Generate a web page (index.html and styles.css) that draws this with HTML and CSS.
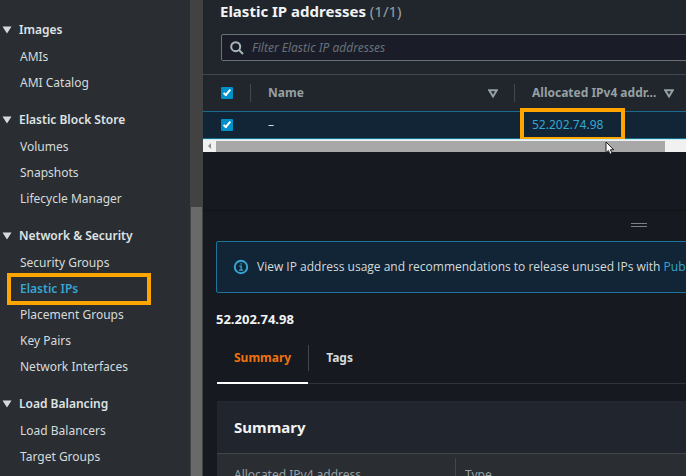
FILE: index.html
```html
<!DOCTYPE html>
<html lang="en">
<head>
<meta charset="utf-8">
<title>Elastic IP addresses</title>
<link rel="stylesheet" href="styles.css">
</head>
<body>
<nav class="sidebar" aria-label="EC2 navigation">
  <section class="group">
    <h2><svg class="caret" viewBox="0 0 10 8"><path d="M0.5 0.5h9L5 7.5z"/></svg>Images</h2>
    <ul><li><a href="#">AMIs</a></li><li><a href="#">AMI Catalog</a></li></ul>
  </section>
  <section class="group">
    <h2><svg class="caret" viewBox="0 0 10 8"><path d="M0.5 0.5h9L5 7.5z"/></svg>Elastic Block Store</h2>
    <ul><li><a href="#">Volumes</a></li><li><a href="#">Snapshots</a></li><li><a href="#">Lifecycle Manager</a></li></ul>
  </section>
  <section class="group">
    <h2><svg class="caret" viewBox="0 0 10 8"><path d="M0.5 0.5h9L5 7.5z"/></svg>Network &amp; Security</h2>
    <ul><li><a href="#">Security Groups</a></li><li class="current"><a href="#" aria-current="page">Elastic IPs</a></li><li><a href="#">Placement Groups</a></li><li><a href="#">Key Pairs</a></li><li><a href="#">Network Interfaces</a></li></ul>
  </section>
  <section class="group">
    <h2><svg class="caret" viewBox="0 0 10 8"><path d="M0.5 0.5h9L5 7.5z"/></svg>Load Balancing</h2>
    <ul><li><a href="#">Load Balancers</a></li><li><a href="#">Target Groups</a></li></ul>
  </section>
</nav>
<div class="vscroll"><div class="vthumb"></div></div>
<main>
  <section class="list">
    <h1>Elastic IP addresses <span>(1/1)</span></h1>
    <label class="search">
      <svg viewBox="0 0 14 14"><circle cx="5.7" cy="5.7" r="4.5"/><path d="M9 9l4 4"/></svg>
      <input type="text" placeholder="Filter Elastic IP addresses" aria-label="Filter Elastic IP addresses">
    </label>
    <table>
      <colgroup><col class="c-check"><col class="c-name"><col></colgroup>
      <thead>
        <tr>
          <th><input type="checkbox" checked aria-label="Select all"></th>
          <th><div class="head">Name<svg class="sort" viewBox="0 0 10 9"><path d="M1.2 1.2h7.6L5 7.4z"/></svg></div></th>
          <th><div class="head">Allocated IPv4 addr...<svg class="sort" viewBox="0 0 10 9"><path d="M1.2 1.2h7.6L5 7.4z"/></svg></div></th>
        </tr>
      </thead>
      <tbody>
        <tr>
          <td><input type="checkbox" checked aria-label="Select 52.202.74.98"></td>
          <td>–</td>
          <td><a class="marked" href="#">52.202.74.98</a></td>
        </tr>
      </tbody>
    </table>
    <div class="hscroll">
      <svg class="arrow" viewBox="0 0 13 12"><path d="M8 3v6L5 6z"/></svg>
      <div class="hthumb"></div>
      <svg class="cursor" viewBox="0 0 10 14"><path d="M1 1v10.6l2.4-2.1 1.6 3.7 2-.9-1.6-3.6h3.3z"/></svg>
    </div>
  </section>
  <div class="gap"></div>
  <section class="details">
    <div class="grip"></div>
    <div class="alert">
      <svg viewBox="0 0 16 16"><circle cx="8" cy="8" r="6.2"/><path d="M6.3 7.2H8.2V11M6.1 11.2h4M7.3 4.8h1.6"/></svg>
      <p>View IP address usage and recommendations to release unused IPs with <a href="#">Public IP insights</a></p>
    </div>
    <h2>52.202.74.98</h2>
    <div class="tabs" role="tablist">
      <button class="active" role="tab" aria-selected="true">Summary</button>
      <button role="tab" aria-selected="false">Tags</button>
    </div>
    <div class="card">
      <h3>Summary</h3>
      <div class="facts"><div>Allocated IPv4 address</div><div>Type</div></div>
    </div>
  </section>
</main>
</body>
</html>
```
FILE: styles.css
```css
* { box-sizing: border-box; }
body {
  margin: 0;
  height: 100vh;
  display: flex;
  overflow: hidden;
  background: #16191f;
  color: #d5dbdb;
  font: 12px/18px "Noto Sans", "Open Sans", sans-serif;
}
h1, h2, h3, p, ul { margin: 0; padding: 0; }
a { color: #36a5d0; text-decoration: none; white-space: nowrap; }

.sidebar {
  flex: 0 0 190px;
  background: #2a2e33;
  padding-top: 16px;
}
.group { margin-bottom: 10px; }
.group h2 {
  display: flex;
  align-items: center;
  gap: 7px;
  padding-left: 2px;
  font-size: 12px;
  line-height: 28px;
  font-weight: 600;
  color: #dfe3e4;
}
.caret { width: 10px; height: 8px; fill: #d5dbdb; }
.group ul { list-style: none; padding-left: 20px; }
.group li { line-height: 26px; }
.group li a { color: #d5dbdb; }
.group .current { position: relative; }
.group .current a { color: #36a5d0; font-weight: 600; }
.current::after {
  content: "";
  position: absolute;
  inset: -3px 39px -3px -13px;
  border: 4px solid #ffa500;
}
.vscroll {
  flex: 0 0 13px;
  background: #424242;
  padding: 207px 1px 0;
}
.vthumb { height: 100%; background: #696969; }

main { flex: 1; min-width: 0; overflow: hidden; }
.list { background: #21252c; }
h1 {
  padding: 0 17px;
  font-size: 15px;
  line-height: 22px;
  font-weight: 700;
  color: #f2f3f3;
}
h1 span { font-weight: 400; color: #95a0a2; }
.search {
  display: flex;
  align-items: center;
  gap: 8px;
  height: 27px;
  margin: 12px -4px 13px 18px;
  padding: 0 8px;
  border: 1px solid #687078;
  border-radius: 2px;
  background: #1a1d28;
}
.search svg { width: 14px; height: 14px; fill: none; stroke: #aab7b8; stroke-width: 2; }
.search input {
  flex: 1;
  border: 0;
  padding: 0;
  background: none;
  color: #d5dbdb;
  font: inherit;
}
.search input::placeholder { color: #687078; font-style: italic; opacity: 1; }

table { width: 100%; table-layout: fixed; border-collapse: collapse; border-top: 1px solid #414750; }
.c-check { width: 47px; }
.c-name { width: 264px; }
th, td { padding: 0 0 0 17px; text-align: left; font-weight: 400; }
th { height: 37px; color: #95a0a2; font-weight: 700; }
th .head {
  display: flex;
  align-items: center;
  justify-content: space-between;
  height: 18px;
  margin-left: -17px;
  padding: 0 16px 0 17px;
  border-left: 1px solid #414750;
  white-space: nowrap;
}
th:last-child .head { padding-right: 12px; }
.sort { flex: none; width: 10px; height: 9px; fill: none; stroke: #95a0a2; stroke-width: 2; }
td { height: 27px; }
td + td { padding-left: 18px; }
tbody tr { background: #112536; border: solid #176b8f; border-width: 1px 0; }
input[type="checkbox"] {
  appearance: none;
  display: block;
  width: 12px;
  height: 12px;
  margin: 0 0 0 1px;
  border-radius: 1px;
  background: #0090c9;
  position: relative;
}
input[type="checkbox"]::after {
  content: "";
  position: absolute;
  left: 4px;
  top: 1px;
  width: 4px;
  height: 8px;
  border: solid #fff;
  border-width: 0 2px 2px 0;
  box-sizing: border-box;
  rotate: 40deg;
}
.marked { position: relative; }
.marked::after {
  content: "";
  position: absolute;
  inset: -8px -22px -8px -12px;
  border: 4px solid #ffa500;
}
.hscroll {
  position: relative;
  display: flex;
  align-items: center;
  height: 13px;
  padding-right: 21px;
  background: #f1f1f1;
  border-top: 1px solid #c4eef5;
}
.arrow { width: 13px; height: 12px; fill: #8d8d8d; }
.hthumb { flex: 1; height: 11px; background: #a8a8a8; }
.cursor {
  position: absolute;
  right: 71px;
  top: 1px;
  z-index: 1;
  width: 10px;
  height: 14px;
  fill: #fff;
  stroke: #222;
}

.gap { height: 59px; border-bottom: 1px solid #101318; }
.details { display: flow-root; padding-left: 13px; }
.grip {
  width: 16px;
  height: 4px;
  margin: 12px 39px 14px auto;
  border: solid #7b8084;
  border-width: 1px 0;
}
.alert {
  display: flex;
  align-items: center;
  gap: 8px;
  height: 52px;
  margin-right: -4px;
  padding-left: 16px;
  border: 1px solid #1b759b;
  border-radius: 2px;
  background: #112536;
}
.alert svg { flex: none; width: 16px; height: 16px; fill: none; stroke: #36a5d0; stroke-width: 2; }
.alert path { stroke-width: 1.3; }
.alert p { white-space: nowrap; font-family: "Open Sans", "Noto Sans", sans-serif; }
.details h2 {
  margin: 17px 0;
  font-size: 13px;
  line-height: 18px;
  font-weight: 700;
  color: #f2f3f3;
}
.tabs {
  display: flex;
  align-items: flex-start;
  height: 39px;
  margin-left: 1px;
  border-bottom: 1px solid #30343a;
}
.tabs button {
  position: relative;
  height: 26px;
  padding: 0 17px;
  border: 0;
  background: none;
  color: #d5dbdb;
  font: 700 12px/26px "Noto Sans", "Open Sans", sans-serif;
}
.tabs button + button { border-left: 1px solid #41464d; }
.tabs .active { color: #ec7211; }
.tabs .active::after {
  content: "";
  position: absolute;
  inset: 37px 0 auto 0;
  height: 2px;
  background: #fff;
}
.card { margin: 17px 0 0 1px; background: #2a2d32; border-top: 1px solid #25282c; }
.card h3 {
  padding: 0 17px;
  font-size: 15px;
  line-height: 51px;
  font-weight: 700;
  color: #f2f3f3;
  background: #21252e;
  border-bottom: 1px solid #41464d;
}
.facts { display: flex; padding-top: 4px; color: #95a0a2; }
.facts div { flex: 0 0 238px; padding: 8px 0 0 17px; }
.facts div + div { flex: 1; padding-left: 9px; border-left: 1px solid #41464d; }
```
